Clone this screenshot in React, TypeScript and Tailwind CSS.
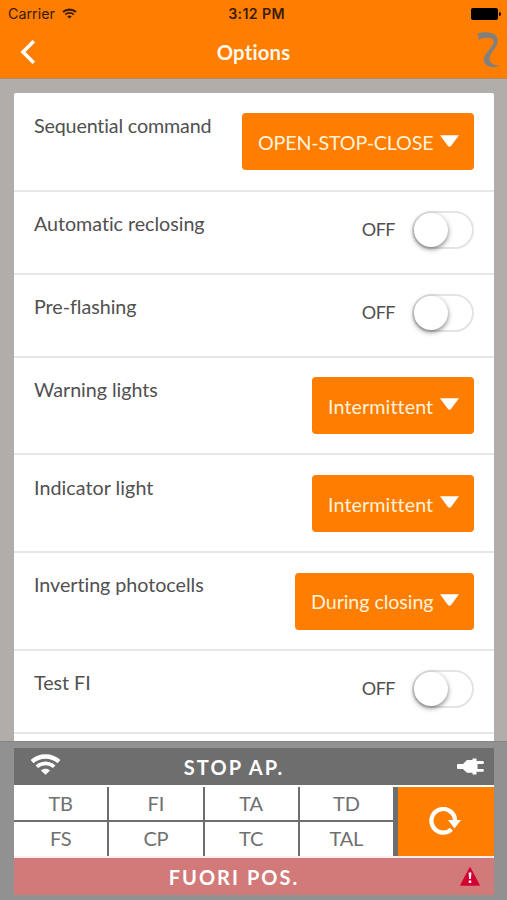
interface OptionType {
  label: string;
  value: string;
  kind: "select" | "switch";
  labelTracking?: string;
  width?: string;
}

const options: OptionType[] = [
  {
    label: "Sequential command",
    value: "OPEN-STOP-CLOSE",
    kind: "select",
    labelTracking: "tracking-[-0.15px]",
    width: "w-[232px] tracking-[-0.16px]",
  },
  { label: "Automatic reclosing", value: "OFF", kind: "switch" },
  { label: "Pre-flashing", value: "OFF", kind: "switch" },
  {
    label: "Warning lights",
    value: "Intermittent",
    kind: "select",
    width: "w-[162px] tracking-[0.1px]",
  },
  {
    label: "Indicator light",
    value: "Intermittent",
    kind: "select",
    labelTracking: "tracking-[0.05px]",
    width: "w-[162px] tracking-[0.1px]",
  },
  {
    label: "Inverting photocells",
    value: "During closing",
    kind: "select",
    width: "w-[179px] tracking-[-0.08px]",
  },
  { label: "Test FI", value: "OFF", kind: "switch" },
];

const inputs = ["TB", "FI", "TA", "TD", "FS", "CP", "TC", "TAL"];

function WifiIcon({ className }: { className: string }) {
  return (
    <svg viewBox="0 0 30 20" className={className} fill="none">
      <path
        d="M2 7.2C9.2 .6 20.8 .6 28 7.2"
        stroke="currentColor"
        strokeWidth="4.2"
      />
      <path
        d="M6.6 12.2C11.2 7.8 18.8 7.8 23.4 12.2"
        stroke="currentColor"
        strokeWidth="3.6"
      />
      <path
        d="M10.6 15.8C13 13.4 17 13.4 19.4 15.8L15 20Z"
        fill="currentColor"
      />
    </svg>
  );
}

function StatusBar() {
  return (
    <div className="flex h-[27px] items-center justify-between pl-2 pr-[6px] font-['Inter',sans-serif] text-[#3a1c00]">
      <div className="flex w-[160px] items-center">
        <span className="w-[54px] text-[14.3px]">Carrier</span>
        <WifiIcon className="h-[11px] w-[15px]" />
      </div>
      <span className="pl-1 text-[14.2px] font-semibold tracking-[0.35px]">
        3:12 PM
      </span>
      <div className="flex w-[160px] items-center justify-end">
        <div className="h-3 w-[27px] rounded-[2px] bg-black" />
        <div className="ml-px h-1 w-[2px] rounded-r-full bg-black" />
      </div>
    </div>
  );
}

function Header() {
  return (
    <header className="h-[78px] shrink-0 bg-[#ff7d00]">
      <StatusBar />
      <div className="flex h-[50px] items-center justify-between pl-5 pr-[7px]">
        <svg viewBox="0 0 16 24" className="h-6 w-20 -translate-x-8" fill="none">
          <path d="M13.8 1.2L3 12L13.8 22.8" stroke="white" strokeWidth="3.6" />
        </svg>
        <h1 className="text-[20.3px] font-bold tracking-[0.2px] text-[#fff8ea]">
          Options
        </h1>
        <div className="flex w-[93px] justify-end">
          <svg viewBox="0 0 23 36" className="mb-[5px] h-9 w-[23px]" fill="#808080">
            <path d="M.5 1.5C5 0 11 0 15 1.2C20 3 22 7 20 12.5C18 17.5 12.4 22 12.4 27C12.6 31 16.5 33.6 22 33.3C20.5 35.5 13 36.3 9.5 33C5.5 29.5 6.2 25.5 9.5 21C12.8 16.5 17 12.5 16.6 9C16 6.3 13.5 5.3 9 5.8C5.5 6.2 3.2 6.6 2.4 8.6Z" />
          </svg>
        </div>
      </div>
    </header>
  );
}

function Select({ value, width }: { value: string; width?: string }) {
  return (
    <button
      className={`flex h-[57px] items-center justify-between rounded-[4px] bg-[#ff7d00] pl-4 pr-[15px] text-[19.7px] text-[#fff3dc] ${width}`}
    >
      <span className="whitespace-nowrap pt-[2px]">{value}</span>
      <svg viewBox="0 0 19 12" className="mb-[2px] h-3 w-[19px]" fill="white">
        <path d="M0 .3H19L11 10.9Q9.5 12.5 8 10.9Z" />
      </svg>
    </button>
  );
}

function Switch({ value }: { value: string }) {
  return (
    <div className="flex items-center pt-[6px]">
      <span className="mr-[17px] text-[18px] tracking-[-0.5px] text-[#505050]">
        {value}
      </span>
      <div className="h-[38px] w-[62px] rounded-full border-2 border-[#e4e4e4] bg-white">
        <div className="h-[34px] w-[34px] rounded-full bg-white shadow-[0_2px_5px_rgba(0,0,0,0.5)]" />
      </div>
    </div>
  );
}

function OptionRow({ option }: { option: OptionType }) {
  return (
    <div
      className={`flex shrink-0 items-start justify-between border-b-2 border-[#e6e7e7] pl-5 pr-5 ${
        option.kind === "select"
          ? "h-[97.8px] pt-[19.4px]"
          : "h-[83px] pt-[13px]"
      }`}
    >
      <span
        className={`text-[19.7px] leading-6 text-[#505050] ${
          option.labelTracking ?? "tracking-[-0.03px]"
        } ${option.kind === "select" ? "mt-[0.8px]" : "mt-[7px]"}`}
      >
        {option.label}
      </span>
      {option.kind === "select" ? (
        <Select value={option.value} width={option.width} />
      ) : (
        <Switch value={option.value} />
      )}
    </div>
  );
}

function StatusPanel() {
  return (
    <footer className="h-[159px] shrink-0 border-t border-[#858585] bg-[#919191] pl-[14px] pr-[13px] pt-[6px]">
      <div className="flex h-[37px] items-center bg-[#6e6e6e] pl-4 pr-[10px] text-white">
        <WifiIcon className="mb-1 h-[21px] w-[31px]" />
        <span className="flex-1 pr-[50px] text-center text-[20px] font-bold tracking-[2.1px]">
          STOP AP.
        </span>
        <svg viewBox="0 0 27 17" className="mb-px h-[17px] w-[27px]" fill="white">
          <path d="M1 6Q0 6 0 7V9.8Q0 11 1 11H6Q8 13 10 14.8H15.5V16.5H19.5V13.8H25.5Q27 13.8 27 12.5T25.5 11H20.5V6H25.5Q27 6 27 4.5T25.5 3H19.5V.5H15.5V2H10Q8 4 6 6Z" />
        </svg>
      </div>
      <div className="flex h-[73px] border-y-2 border-t-white border-b-[#fbeeee] bg-[#6e6e6e]">
        <div className="grid w-[379px] grid-cols-4 grid-rows-[33px_34px] gap-[2px]">
          {inputs.map((input) => (
            <div
              key={input}
              className="flex items-center justify-center bg-white pb-[2px] text-[20px] tracking-[-0.2px] text-[#707070]"
            >
              {input}
            </div>
          ))}
        </div>
        <button className="ml-[5px] flex flex-1 items-center justify-center bg-[#ff7d00] pb-px pr-[3px]">
          <svg viewBox="0 0 32 28" className="h-7 w-8" fill="none">
            <path
              d="M22.5 22.2A11.8 11.8 0 1 1 26 14"
              stroke="white"
              strokeWidth="4.3"
            />
            <path d="M19 13H32L25.5 21.5Z" fill="white" />
          </svg>
        </button>
      </div>
      <div className="flex h-[37px] items-center bg-[#d27979] pl-[14px] pr-[14px] text-white">
        <span className="flex-1 pr-[20px] text-center text-[20px] font-bold tracking-[2.05px]">
          FUORI POS.
        </span>
        <svg viewBox="0 0 20 19" className="mb-px h-[19px] w-5">
          <path
            d="M10 1L19 18H1Z"
            fill="#d50032"
            stroke="#d50032"
            strokeWidth="1.5"
            strokeLinejoin="round"
          />
          <path d="M8.6 5.5H11.4L10.9 12H9.1ZM8.8 13.5H11.2V16H8.8Z" fill="white" />
        </svg>
      </div>
    </footer>
  );
}

export default function App() {
  return (
    <div className="flex h-[900px] w-[507px] flex-col overflow-hidden font-['Lato',sans-serif]">
      <Header />
      <main className="min-h-0 flex-1 overflow-hidden border-t border-[#b58a5e] bg-[#b0adab] pl-[14px] pr-[13px] pt-[14px]">
        <div className="flex h-[800px] flex-col rounded-[2px] bg-white pt-[0.8px]">
          {options.map((option) => (
            <OptionRow key={option.label} option={option} />
          ))}
        </div>
      </main>
      <StatusPanel />
    </div>
  );
}
